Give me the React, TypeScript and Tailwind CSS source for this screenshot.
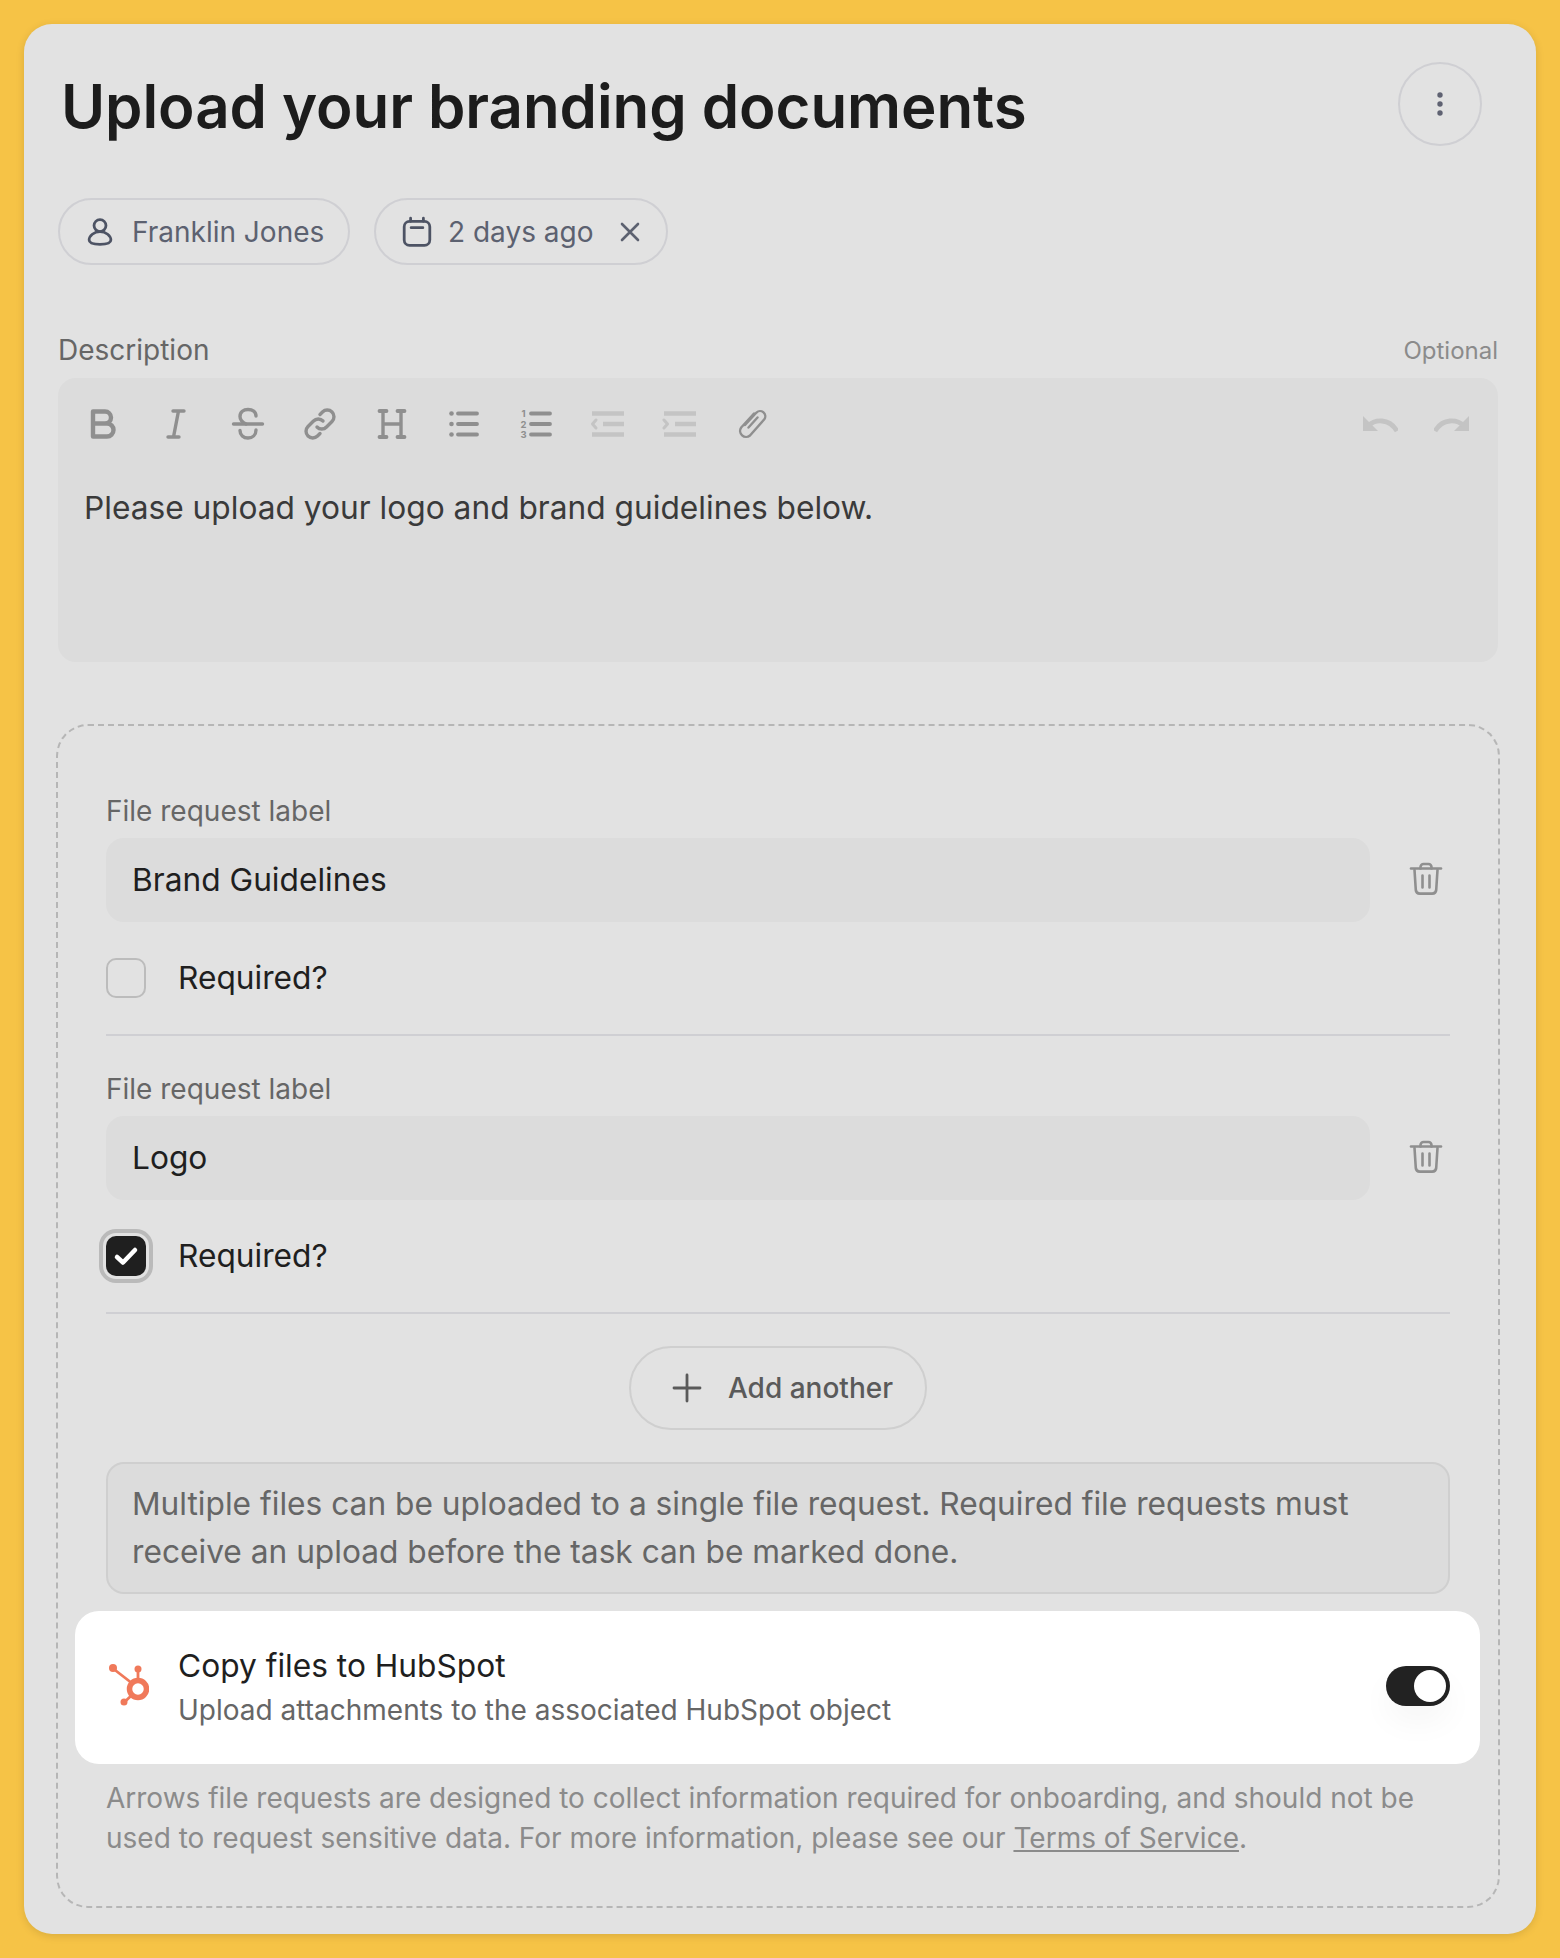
import React from "react";

const g = "#8f8f8f";
const l = "#c4c4c4";

function TI({ children }: { children: React.ReactNode }) {
  return (
    <div className="flex h-[72px] w-[72px] shrink-0 items-center justify-center">
      <svg width="36" height="36" viewBox="0 0 36 36" fill="none" strokeLinecap="round" strokeLinejoin="round">
        {children}
      </svg>
    </div>
  );
}

function Trash() {
  return (
    <svg width="36" height="36" viewBox="0 0 36 36" fill="none" stroke="#8f8f8f" strokeWidth="2.6" strokeLinecap="round" strokeLinejoin="round">
      <path d="M3 6.5h30" />
      <path d="M12.5 6.5V5a3 3 0 0 1 3-3h5a3 3 0 0 1 3 3v1.5" />
      <path d="M6.5 8l1.3 20a4 4 0 0 0 4 3.6h12.4a4 4 0 0 0 4-3.6L29.5 8" />
      <path d="M14.5 13.5v12M21.5 13.5v12" />
    </svg>
  );
}

function FileRow({ value, checked }: { value: string; checked?: boolean }) {
  return (
    <div className="mb-[34px] border-b-2 border-[#cfcfd3] pb-[36px]">
      <div className="text-[28px] leading-[38px] text-[#666666]">File request label</div>
      <div className="mt-[8px] flex items-center">
        <div className="flex h-[84px] w-[1264px] items-center rounded-[18px] bg-[#dcdcdc] px-[26px] text-[31.7px] text-[#1f1f1f]">
          {value}
        </div>
        <div className="ml-[38px]">
          <Trash />
        </div>
      </div>
      <div className="mt-[36px] flex items-center">
        {checked ? (
          <div className="flex h-[40px] w-[40px] items-center justify-center rounded-[10px] bg-[#1f1f1f] shadow-[0_0_0_3px_#e2e2e2,0_0_0_7px_#bababa]">
            <svg width="26" height="26" viewBox="0 0 26 26" fill="none" stroke="#ffffff" strokeWidth="4.5" strokeLinecap="round" strokeLinejoin="round">
              <path d="M4 14l6 5.500L22 7" />
            </svg>
          </div>
        ) : (
          <div className="h-[40px] w-[40px] rounded-[10px] border-2 border-[#bcbcbc]" />
        )}
        <span className="ml-[32px] text-[31.7px] leading-[40px] text-[#1f1f1f]">Required?</span>
      </div>
    </div>
  );
}

export default function App() {
  return (
    <div className="h-[1958px] w-[1560px] bg-[#f6c346] p-[24px] font-['Inter',sans-serif]">
      <div className="h-[1910px] w-[1512px] rounded-[28px] bg-[#e2e2e2] pl-[34px] pr-[38px] pt-[38px] shadow-[0_2px_8px_rgba(0,0,0,0.12)]">
        {/* Title */}
        <div className="flex items-start justify-between pl-[3px] pr-[16px]">
          <h1 className="pt-[2px] text-[60px] leading-[84px] font-semibold tracking-[-0.07px] text-[#1c1c1c]">
            Upload your branding documents
          </h1>
          <button className="flex h-[84px] w-[84px] items-center justify-center rounded-full border-2 border-[#cfcfd3]">
            <svg width="10" height="30" viewBox="0 0 10 30" fill="#5f6272">
              <circle cx="5" cy="6" r="2.7" />
              <circle cx="5" cy="15" r="2.7" />
              <circle cx="5" cy="24" r="2.7" />
            </svg>
          </button>
        </div>

        {/* Chips */}
        <div className="mt-[50px] flex gap-[24px]">
          <div className="flex h-[67px] w-[292px] items-center rounded-full border-2 border-[#cfcfd3] pl-[24px] text-[28px] text-[#5c6170]">
            <svg width="32" height="32" viewBox="0 0 30 30" fill="none" stroke="#4d5364" strokeWidth="2.6">
              <circle cx="15" cy="9" r="5.6" />
              <path d="M15 14.6c-5.6 0-10.2 4-10.2 7.9 0 3 3 4 10.2 4s10.2-1 10.2-4c0-3.900-4.600-7.900-10.200-7.900z" />
            </svg>
            <span className="ml-[16px]">Franklin Jones</span>
          </div>
          <div className="flex h-[67px] w-[294px] items-center rounded-full border-2 border-[#cfcfd3] pl-[25px] text-[28px] text-[#5c6170]">
            <svg width="32" height="32" viewBox="0 0 30 30" fill="none" stroke="#4d5364" strokeWidth="2.6" strokeLinecap="round">
              <rect x="3" y="5" width="24" height="22.500" rx="5" />
              <path d="M9 2v3M21 2v3M9.500 11h11" />
            </svg>
            <span className="ml-[15px]">2 days ago</span>
            <svg className="ml-[26px]" width="22" height="22" viewBox="0 0 22 22" fill="none" stroke="#5c6170" strokeWidth="2.600" strokeLinecap="round">
              <path d="M3 3l16 16M19 3L3 19" />
            </svg>
          </div>
        </div>

        {/* Description */}
        <div className="mt-[66px] flex items-end justify-between">
          <span className="text-[28px] leading-[38px] text-[#666666]">Description</span>
          <span className="text-[24px] leading-[36px] text-[#8b8b8b]">Optional</span>
        </div>
        <div className="mt-[9px] h-[284px] rounded-[18px] bg-[#dcdcdc]">
          <div className="flex items-center justify-between pl-[10px] pr-[10px] pt-[10px]">
            <div className="flex">
              <TI>
                <path d="M7 5.500h12a6 6 0 0 1 0 12H7zM7 17.500h14a6.500 6.500 0 0 1 0 13H7z" stroke={g} strokeWidth="4.400" />
              </TI>
              <TI>
                <path d="M15 5h11M10 31h11M20.500 5l-5 26" stroke={g} strokeWidth="3.400" />
              </TI>
              <TI>
                <path d="M3.500 18h29" stroke={g} strokeWidth="3.400" />
                <path d="M26 10c0-4.500-3.500-6.500-8-6.500s-8 2.500-8 7c0 4 3 6 6 7.500M26 24c0 5-3.500 8-8 8s-8-3-8-7.500" stroke={g} strokeWidth="3.400" />
              </TI>
              <TI>
                <path d="M15 21a6.500 6.500 0 0 0 9.500 0l5.500-5.500a6.700 6.700 0 0 0-9.500-9.500l-2.500 2.500" stroke={g} strokeWidth="3.400" />
                <path d="M21 15a6.500 6.500 0 0 0-9.500 0L6 20.500a6.700 6.700 0 0 0 9.500 9.500l2.500-2.500" stroke={g} strokeWidth="3.400" />
              </TI>
              <TI>
                <path d="M9 5v26M27 5v26M9 18h18" stroke={g} strokeWidth="3.400" />
                <path d="M5.500 5h7M5.500 31h7M23.500 5h7M23.500 31h7" stroke={g} strokeWidth="3.800" />
              </TI>
              <TI>
                <path d="M12 7.500h19M12 18h19M12 28.500h19" stroke={g} strokeWidth="3.800" />
                <circle cx="5.500" cy="7.500" r="2.300" fill={g} />
                <circle cx="5.500" cy="18" r="2.300" fill={g} />
                <circle cx="5.500" cy="28.500" r="2.300" fill={g} />
              </TI>
              <TI>
                <path d="M13 7.500h19M13 18h19M13 28.500h19" stroke={g} strokeWidth="3.800" />
                <text x="5.500" y="11" fontSize="9.500" fontWeight="700" textAnchor="middle" fill={g} stroke="none" fontFamily="Inter, sans-serif">1</text>
                <text x="5.500" y="21.500" fontSize="9.500" fontWeight="700" textAnchor="middle" fill={g} stroke="none" fontFamily="Inter, sans-serif">2</text>
                <text x="5.500" y="32" fontSize="9.500" fontWeight="700" textAnchor="middle" fill={g} stroke="none" fontFamily="Inter, sans-serif">3</text>
              </TI>
              <TI>
                <path d="M2 7.500h32M13 18h21M2 28.500h32" stroke={l} strokeWidth="4.400" strokeLinecap="butt" />
                <path d="M6 14l-3.500 4L6 22" stroke={l} strokeWidth="3" />
              </TI>
              <TI>
                <path d="M2 7.500h32M13 18h21M2 28.500h32" stroke={l} strokeWidth="4.400" strokeLinecap="butt" />
                <path d="M2 14l3.500 4L2 22" stroke={l} strokeWidth="3" />
              </TI>
              <TI>
                <path d="M11 19L22.500 6.500a5.200 5.200 0 0 1 7.800 6.800L16 29.500a6 6 0 0 1-8.800-8L20 7.500M14.500 21.500l9-10" stroke={g} strokeWidth="2.400" />
              </TI>
            </div>
            <div className="flex">
              <TI>
                <path d="M1 10v15h15L1 10z" fill={l} />
                <path d="M6 20c7-7 21-8 29 5" stroke={l} strokeWidth="4.800" strokeLinecap="butt" />
              </TI>
              <TI>
                <path d="M35 10v15H20L35 10z" fill={l} />
                <path d="M30 20c-7-7-21-8-29 5" stroke={l} strokeWidth="4.800" strokeLinecap="butt" />
              </TI>
            </div>
          </div>
          <div className="mt-[24px] pl-[26px] text-[31.7px] leading-[48px] text-[#3a3a3a]">
            Please upload your logo and brand guidelines below.
          </div>
        </div>

        {/* Dashed box */}
        <div className="-mx-[2px] mt-[62px] h-[1184px] rounded-[32px] border-2 border-dashed border-[#b6b6b6] pt-[66px]">
          <div className="pl-[48px] pr-[48px]">
            <FileRow value="Brand Guidelines" />
            <FileRow value="Logo" checked />
            <div className="-mt-[2px] flex justify-center">
              <button className="flex h-[84px] w-[298px] items-center justify-center rounded-full border-2 border-[#cfcfcf] pl-[9px] text-[28px] font-medium text-[#5a5a5a]">
                <svg width="30" height="30" viewBox="0 0 30 30" fill="none" stroke="#5a5a5a" strokeWidth="2.800" strokeLinecap="round">
                  <path d="M15 2v26M2 15h26" />
                </svg>
                <span className="ml-[26px]">Add another</span>
              </button>
            </div>
            <div className="mt-[32px] h-[132px] rounded-[18px] border-2 border-[#cfcfcf] bg-[#dcdcdc] px-[24px] py-[16px] text-[31.7px] leading-[48px] text-[#666666]">
              Multiple files can be uploaded to a single file request. Required file requests must receive an upload before the task can be marked done.
            </div>
          </div>
          <div className="ml-[17px] mr-[18px] mt-[17px] flex h-[153px] items-center rounded-[24px] bg-white pl-[30px] pr-[30px]">
            <svg width="44" height="48" viewBox="0 0 44 48" fill="none" stroke="#f0795a" className="mb-[3px] shrink-0">
              <circle cx="33" cy="27" r="8.500" strokeWidth="5.500" />
              <path d="M8 6.500l20 15.500M33 7v12M27 33l-7.500 7" strokeWidth="2.800" />
              <circle cx="8" cy="6" r="4" fill="#f0795a" stroke="none" />
              <circle cx="33" cy="7" r="3.500" fill="#f0795a" stroke="none" />
              <circle cx="19" cy="40" r="3.500" fill="#f0795a" stroke="none" />
            </svg>
            <div className="ml-[29px] flex-1">
              <div className="text-[31.7px] leading-[44px] text-[#1f1f1f]">Copy files to HubSpot</div>
              <div className="text-[28px] leading-[44px] text-[#666666]">Upload attachments to the associated HubSpot object</div>
            </div>
            <div className="mb-[4px] flex h-[40px] w-[64px] items-center justify-end rounded-full bg-[#222222] pr-[4px] shadow-[0_16px_32px_rgba(0,0,0,0.04)]">
              <div className="h-[32px] w-[32px] rounded-full bg-white" />
            </div>
          </div>
          <div className="mt-[14px] pl-[48px] pr-[48px] text-[28px] leading-[40px] text-[#8b8b8b]">
            Arrows file requests are designed to collect information required for onboarding, and should not be used to request sensitive data. For more information, please see our{" "}
            <span className="underline">Terms of Service</span>.
          </div>
        </div>
      </div>
    </div>
  );
}
